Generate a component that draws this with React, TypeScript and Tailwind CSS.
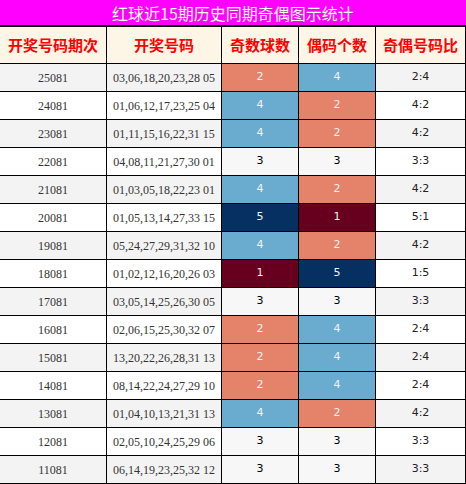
import React from 'react';

const rows: [string, string, number, number][] = [
  ['25081', '03,06,18,20,23,28 05', 2, 4],
  ['24081', '01,06,12,17,23,25 04', 4, 2],
  ['23081', '01,11,15,16,22,31 15', 4, 2],
  ['22081', '04,08,11,21,27,30 01', 3, 3],
  ['21081', '01,03,05,18,22,23 01', 4, 2],
  ['20081', '01,05,13,14,27,33 15', 5, 1],
  ['19081', '05,24,27,29,31,32 10', 4, 2],
  ['18081', '01,02,12,16,20,26 03', 1, 5],
  ['17081', '03,05,14,25,26,30 05', 3, 3],
  ['16081', '02,06,15,25,30,32 07', 2, 4],
  ['15081', '13,20,22,26,28,31 13', 2, 4],
  ['14081', '08,14,22,24,27,29 10', 2, 4],
  ['13081', '01,04,10,13,21,31 13', 4, 2],
  ['12081', '02,05,10,24,25,29 06', 3, 3],
  ['11081', '06,14,19,23,25,32 12', 3, 3],
];

// RdBu scale, 1 = dark red .. 5 = dark blue
const cellColor: Record<number, string> = {
  1: 'bg-[#67001f] text-[#f1f1f1]',
  2: 'bg-[#e5836a] text-[#f1f1f1]',
  3: 'bg-[#f7f7f7] text-[#000000]',
  4: 'bg-[#6aacd0] text-[#f1f1f1]',
  5: 'bg-[#053061] text-[#f1f1f1]',
};

const headers = ['开奖号码期次', '开奖号码', '奇数球数', '偶码个数', '奇偶号码比'];
const widths = ['w-[107px]', 'w-[115px]', 'w-[77px]', 'w-[77px]', 'w-[90px]'];

const App = () => {
  return (
    <div className="w-[466px] h-[484px] bg-white overflow-hidden">
      {/* Title */}
      <div className="h-[27px] bg-[#ff00ff] border-b-2 border-black flex items-center justify-center text-white text-[16px] leading-none font-['Noto_Sans_CJK_SC',sans-serif]">
        红球近15期历史同期奇偶图示统计
      </div>

      {/* Header */}
      <div className="flex h-[37px] border-b border-black bg-[#fdf5e6]">
        {headers.map((h, i) => (
          <div
            key={h}
            className={`${widths[i]} border-r border-black flex items-center justify-center text-[#ff0000] font-bold text-[15px] font-['Noto_Sans_CJK_SC',sans-serif]`}
          >
            {h}
          </div>
        ))}
      </div>

      {/* Rows */}
      {rows.map(([issue, nums, odd, even], idx) => {
        const stripe = idx % 2 === 0 ? 'bg-[#f3f3f3]' : 'bg-white';
        return (
          <div key={issue} className={`flex h-[28px] border-b border-black ${stripe}`}>
            <div className="w-[107px] border-r border-black flex items-center justify-center text-[12px] text-[#333] font-['Liberation_Serif',serif]">
              {issue}
            </div>
            <div className="w-[115px] border-r border-black flex items-center justify-center text-[12px] text-[#333] font-['Liberation_Serif',serif]">
              {nums}
            </div>
            <div className={`w-[77px] border-r border-black flex items-center justify-center text-[11px] font-['DejaVu_Sans',sans-serif] ${cellColor[odd]}`}>
              {odd}
            </div>
            <div className={`w-[77px] border-r border-black flex items-center justify-center text-[11px] font-['DejaVu_Sans',sans-serif] ${cellColor[even]}`}>
              {even}
            </div>
            <div className="w-[90px] border-r border-black flex items-center justify-center text-[11px] text-[#222] font-['DejaVu_Sans',sans-serif]">
              {odd}:{even}
            </div>
          </div>
        );
      })}
    </div>
  );
};

export default App;
